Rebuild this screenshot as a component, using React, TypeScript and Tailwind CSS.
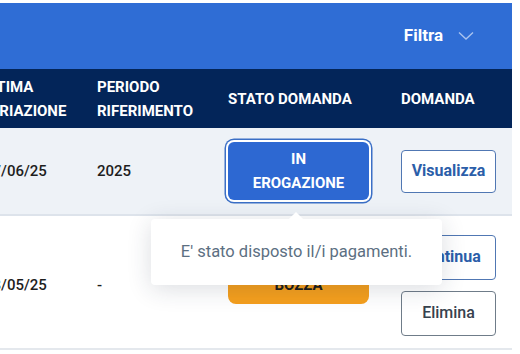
import React from "react";

export default function App() {
  return (
    <div className="relative w-[520px] h-[354px] overflow-hidden bg-white font-['Roboto',sans-serif]">
      <div className="w-[512px] pt-[3px]">
        <div className="h-[66px] bg-[#2f6dd5] flex items-center justify-end pr-[38px] gap-[15px]">
          <span className="text-white text-[17px] font-bold">Filtra</span>
          <svg width="16" height="10" viewBox="0 0 16 10" fill="none">
            <path d="M1 1.5 L8 8 L15 1.5" stroke="#a9c3ef" strokeWidth="1.4" />
          </svg>
        </div>
        <div className="h-[59px] bg-[#032559] flex items-center text-white text-[15px] font-bold leading-[24px]">
          <div className="w-[97px] shrink-0">
            <div className="-ml-[20px]">
              ULTIMA
              <br />
              VARIAZIONE
            </div>
          </div>
          <div className="w-[128px] shrink-0">
            PERIODO
            <br />
            RIFERIMENTO
          </div>
          <div className="w-[176px] shrink-0 pl-[3px]">STATO DOMANDA</div>
          <div className="w-[111px] shrink-0">DOMANDA</div>
        </div>
        <div className="h-[88px] bg-[#eef2f7] border-b-2 border-[#dde3eb] flex items-center text-[15px] font-medium text-[#1e1e1e]">
          <div className="w-[97px] shrink-0">
            <div className="-ml-[16px]">17/06/25</div>
          </div>
          <div className="w-[128px] shrink-0">2025</div>
          <div className="w-[176px] shrink-0 pl-[3px]">
            <div className="w-[141px] h-[58px] rounded-[6px] bg-[#2d68d2] ring-[1.5px] ring-[#3b6fc6] ring-offset-2 ring-offset-white flex items-center justify-center text-center text-white text-[15px] font-bold leading-[24px]">
              IN
              <br />
              EROGAZIONE
            </div>
          </div>
          <div className="w-[111px] shrink-0">
            <div className="w-[95px] h-[43px] rounded-[4px] border-[1.5px] border-[#5077b3] bg-white flex items-center justify-center text-[16px] font-bold text-[#2b5ea9]">
              Visualizza
            </div>
          </div>
        </div>
        <div className="h-[134px] pt-[6px] border-b-2 border-[#e4e8ed] flex items-center text-[15px] font-medium text-[#1e1e1e]">
          <div className="w-[97px] shrink-0">
            <div className="-ml-[16px]">28/05/25</div>
          </div>
          <div className="w-[128px] shrink-0">-</div>
          <div className="w-[176px] shrink-0 pl-[3px]">
            <div className="w-[141px] h-[38px] rounded-[8px] bg-[#f59f1d] flex items-center justify-center text-[15px] font-bold text-[#1c1c1c]">
              BOZZA
            </div>
          </div>
          <div className="w-[111px] shrink-0 flex flex-col gap-[11px]">
            <div className="w-[95px] h-[45px] rounded-[4px] border-[1.5px] border-[#5077b3] bg-white flex items-center justify-center text-[16px] font-bold text-[#2b5ea9]">
              Continua
            </div>
            <div className="w-[95px] h-[45px] rounded-[4px] border-[1.5px] border-[#6f7c89] bg-white flex items-center justify-center text-[16px] font-medium text-[#37424e]">
              Elimina
            </div>
          </div>
        </div>
      </div>
      <div className="absolute left-[151px] top-[219px] w-[291px] h-[66px] bg-white rounded-[4px] shadow-[0_4px_24px_rgba(30,45,70,0.16)] flex items-center justify-center">
        <div className="absolute left-[140px] -top-[5px] w-[10px] h-[10px] bg-white rotate-45" />
        <span className="relative text-[16.5px] text-[#5c6f82]">E' stato disposto il/i pagamenti.</span>
      </div>
    </div>
  );
}
